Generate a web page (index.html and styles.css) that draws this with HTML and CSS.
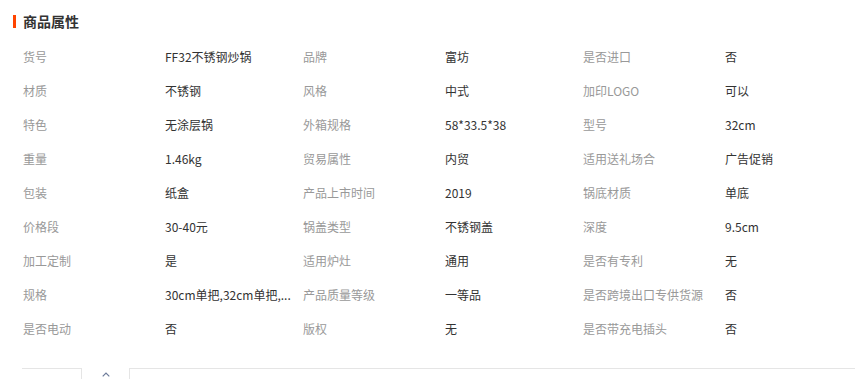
FILE: index.html
```html
<!DOCTYPE html>
<html lang="zh">
<head>
<meta charset="utf-8">
<link rel="stylesheet" href="styles.css">
</head>
<body>
<div class="attrs">
  <h3 class="title">商品属性</h3>
  <div class="grid">
    <div class="k">货号</div><div class="v">FF32不锈钢炒锅</div>
    <div class="k">品牌</div><div class="v">富坊</div>
    <div class="k">是否进口</div><div class="v">否</div>

    <div class="k">材质</div><div class="v">不锈钢</div>
    <div class="k">风格</div><div class="v">中式</div>
    <div class="k">加印LOGO</div><div class="v">可以</div>

    <div class="k">特色</div><div class="v">无涂层锅</div>
    <div class="k">外箱规格</div><div class="v">58*33.5*38</div>
    <div class="k">型号</div><div class="v">32cm</div>

    <div class="k">重量</div><div class="v">1.46kg</div>
    <div class="k">贸易属性</div><div class="v">内贸</div>
    <div class="k">适用送礼场合</div><div class="v">广告促销</div>

    <div class="k">包装</div><div class="v">纸盒</div>
    <div class="k">产品上市时间</div><div class="v">2019</div>
    <div class="k">锅底材质</div><div class="v">单底</div>

    <div class="k">价格段</div><div class="v">30-40元</div>
    <div class="k">锅盖类型</div><div class="v">不锈钢盖</div>
    <div class="k">深度</div><div class="v">9.5cm</div>

    <div class="k">加工定制</div><div class="v">是</div>
    <div class="k">适用炉灶</div><div class="v">通用</div>
    <div class="k">是否有专利</div><div class="v">无</div>

    <div class="k">规格</div><div class="v">30cm单把,32cm单把,...</div>
    <div class="k">产品质量等级</div><div class="v">一等品</div>
    <div class="k">是否跨境出口专供货源</div><div class="v">否</div>

    <div class="k">是否电动</div><div class="v">否</div>
    <div class="k">版权</div><div class="v">无</div>
    <div class="k">是否带充电插头</div><div class="v">否</div>
  </div>
  <div class="fold">
    <div class="fold-left"></div>
    <div class="fold-btn">
      <svg width="8" height="5" viewBox="0 0 8 5"><path d="M0.7 4.3 L4 1 L7.3 4.3" fill="none" stroke="#6b7a99" stroke-width="1.2"/></svg>
    </div>
    <div class="fold-right"></div>
  </div>
</div>
</body>
</html>
```

FILE: styles.css
```css
html, body {
  margin: 0;
  padding: 0;
  background: #fff;
}
body {
  font-family: "Noto Sans CJK SC", "Noto Sans", sans-serif;
  font-size: 12px;
  color: #333;
}
.attrs {
  width: 855px;
  overflow: hidden;
}
.title {
  margin: 15px 0 0 13px;
  padding-left: 7px;
  border-left: 3px solid #ff4400;
  height: 13px;
  line-height: 13px;
  font-size: 14px;
  font-weight: bold;
  color: #333;
  display: flex;
  align-items: center;
}
.grid {
  margin: 12px 0 0 23px;
  display: grid;
  grid-template-columns: 142px 138px 142px 138px 142px 138px;
  grid-auto-rows: 34px;
  line-height: 34px;
}
.k {
  color: #999;
  white-space: nowrap;
}
.v {
  color: #333;
  white-space: nowrap;
}
.fold {
  margin-top: 22px;
  display: flex;
  height: 20px;
}
.fold-left {
  margin-left: 22px;
  width: 59px;
  border-top: 1px solid #e5e5e5;
  border-right: 1px solid #e5e5e5;
}
.fold-btn {
  width: 47px;
  display: flex;
  justify-content: center;
  align-items: flex-start;
  padding-top: 4px;
}
.fold-btn svg {
  display: block;
}
.fold-right {
  flex: 1;
  border-top: 1px solid #e5e5e5;
  border-left: 1px solid #e5e5e5;
}
```
